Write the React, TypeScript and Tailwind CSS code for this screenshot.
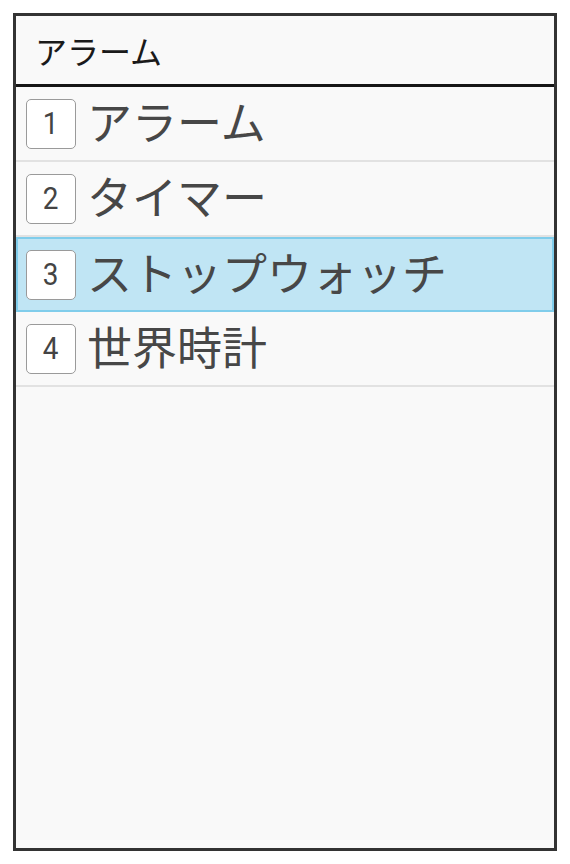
const items = [
  { n: "1", label: "アラーム" },
  { n: "2", label: "タイマー" },
  { n: "3", label: "ストップウォッチ", active: true },
  { n: "4", label: "世界時計" },
];

export default function App() {
  return (
    <div
      className="w-[570px] h-[864px] bg-white pt-[13px] pl-[13px]"
      style={{ fontFamily: '"Noto Sans CJK JP", "Noto Sans", sans-serif' }}
    >
      <div className="w-[544px] h-[838px] border-[3px] border-[#333333] bg-[#f9f9f9] flex flex-col">
        {/* header */}
        <div className="h-[71px] shrink-0 border-b-[3px] border-[#151515] flex items-center pl-[19px] text-[32px] text-[#1a1a1a]">
          アラーム
        </div>

        {/* menu list */}
        {items.map((it) => (
          <div
            key={it.n}
            className={
              it.active
                ? "h-[75px] shrink-0 bg-[#c0e5f4] border-2 border-[#80cdeb] flex items-center"
                : "h-[75px] shrink-0 border-b-2 border-[#e2e2e2] flex items-center pl-[2px]"
            }
          >
            <div className="ml-[8px] w-[50px] h-[50px] rounded-[5px] border-[1.5px] border-[#9a9a9a] bg-white flex items-center justify-center">
              <span
                className="text-[31px] leading-none text-[#444444] scale-x-90"
                style={{ fontFamily: 'Roboto, "Noto Sans", sans-serif' }}
              >
                {it.n}
              </span>
            </div>
            <span className="ml-[11px] -mt-[6px] text-[45px] leading-none text-[#474747]">
              {it.label}
            </span>
          </div>
        ))}
      </div>
    </div>
  );
}
